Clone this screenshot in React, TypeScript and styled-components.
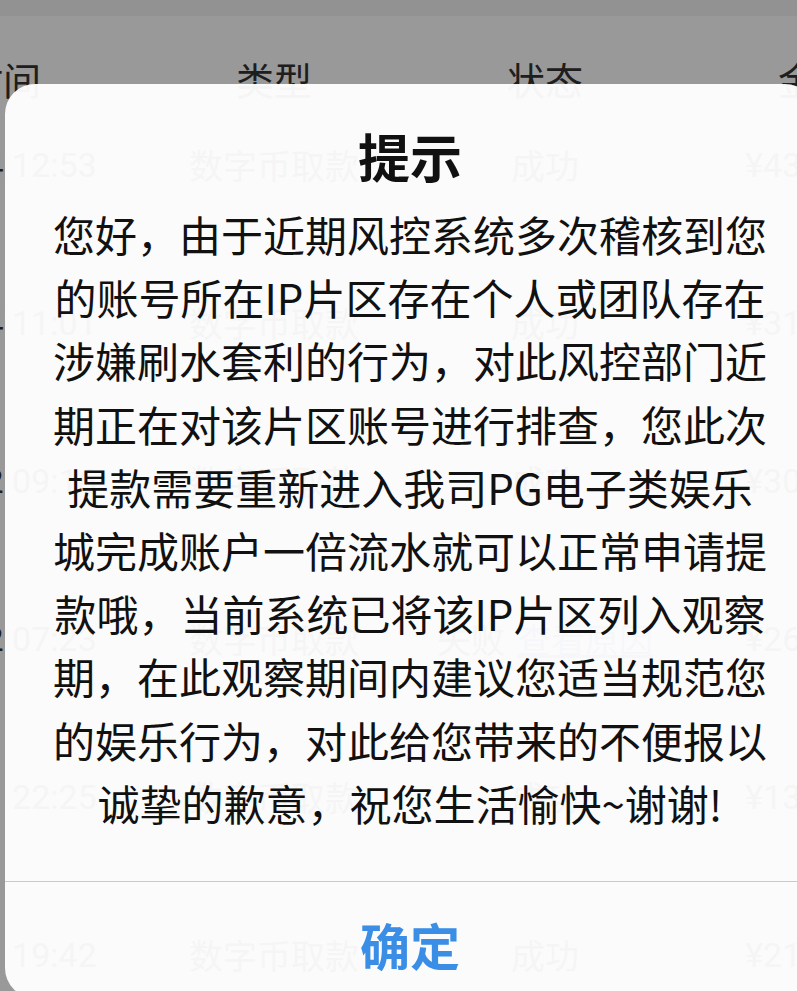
import React from 'react';
import styled, { createGlobalStyle } from 'styled-components';

const GlobalStyle = createGlobalStyle`
  html, body {
    margin: 0;
    padding: 0;
    background: #ffffff;
  }
  body {
    width: 797px;
    height: 991px;
    overflow: hidden;
    font-family: Roboto, "Noto Sans CJK SC", sans-serif;
  }
`;

const Page = styled.div`
  position: relative;
  width: 797px;
  height: 991px;
  overflow: hidden;
  background: #ffffff;
`;

const TopStrip = styled.div`
  height: 16px;
  background: #f3f3f3;
`;

const Table = styled.div`
  width: 1084px;
  margin-left: -171px;
`;

const Row = styled.div<{ $header?: boolean }>`
  display: grid;
  grid-template-columns: 348px 194px 348px 194px;
  height: ${(p) => (p.$header ? '127px' : '158px')};
  box-sizing: border-box;
  padding-top: ${(p) => (p.$header ? '44px' : '2px')};
  font-family: ${(p) => (p.$header ? '"Noto Sans CJK SC", sans-serif' : 'Roboto, "Noto Sans CJK SC", sans-serif')};
  font-size: ${(p) => (p.$header ? '38px' : '34px')};
  line-height: ${(p) => (p.$header ? '38px' : '40px')};
  color: #333333;
`;

const Cell = styled.div<{ $left?: boolean }>`
  text-align: ${(p) => (p.$left ? 'left' : 'center')};
  padding-left: ${(p) => (p.$left ? '3px' : '0')};
  white-space: nowrap;
`;

const CjkText = styled.span`
  font-family: "Noto Sans CJK SC", sans-serif;
`;

const Link = styled.span`
  font-family: "Noto Sans CJK SC", sans-serif;
  color: #3a8ee6;
  text-decoration: underline;
  margin-left: 12px;
`;

const Overlay = styled.div`
  position: absolute;
  inset: 0;
  background: rgba(0, 0, 0, 0.4);
`;

const Dialog = styled.div`
  position: absolute;
  top: 84px;
  left: 5px;
  width: 810px;
  height: 914px;
  border-radius: 30px;
  background: rgba(255, 255, 255, 0.955);
  display: flex;
  flex-direction: column;
  align-items: center;
  padding-top: 42px;
  box-sizing: border-box;
  font-family: "Noto Sans CJK SC", sans-serif;
`;

const Title = styled.div`
  font-size: 52px;
  font-weight: 700;
  line-height: 60px;
  color: #111111;
`;

const Body = styled.div`
  margin-top: 16px;
  width: 740px;
  font-size: 42px;
  line-height: 63.2px;
  text-align: center;
  color: #111111;
`;

const Line = styled.span`
  display: block;
  white-space: nowrap;
`;

const Divider = styled.div`
  align-self: stretch;
  margin-top: 47px;
  height: 1px;
  background: #cacaca;
`;

const Button = styled.div`
  align-self: stretch;
  flex: 1;
  display: flex;
  align-items: center;
  justify-content: center;
  padding-top: 8px;
  font-size: 50px;
  font-weight: 700;
  line-height: 1;
  color: #3a8ee6;
`;

type Rec = { time: string; type: string; status: string; link?: string; amount: string };

const rows: Rec[] = [
  { time: '2024-07-14 12:53', type: '数字币取款', status: '成功', amount: '¥4300.00' },
  { time: '2024-07-14 11:01', type: '数字币取款', status: '成功', amount: '¥3100.00' },
  { time: '2024-07-12 09:16', type: '数字币取款', status: '成功', amount: '¥3000.00' },
  { time: '2024-07-12 07:23', type: '数字币取款', status: '失败', link: '查看原因', amount: '¥2600.00' },
  { time: '2024-07-11 22:25', type: '数字币取款', status: '成功', amount: '¥1300.00' },
  { time: '2024-07-11 19:42', type: '数字币取款', status: '成功', amount: '¥2100.00' },
];

const lines = [
  '您好，由于近期风控系统多次稽核到您',
  '的账号所在IP片区存在个人或团队存在',
  '涉嫌刷水套利的行为，对此风控部门近',
  '期正在对该片区账号进行排查，您此次',
  '提款需要重新进入我司PG电子类娱乐',
  '城完成账户一倍流水就可以正常申请提',
  '款哦，当前系统已将该IP片区列入观察',
  '期，在此观察期间内建议您适当规范您',
  '的娱乐行为，对此给您带来的不便报以',
  '诚挚的歉意，祝您生活愉快~谢谢!',
];

export default function App() {
  return (
    <Page>
      <GlobalStyle />
      <TopStrip />
      <Table>
        <Row $header>
          <Cell>时间</Cell>
          <Cell>类型</Cell>
          <Cell>状态</Cell>
          <Cell>金额</Cell>
        </Row>
        {rows.map((r, i) => (
          <Row key={i}>
            <Cell $left>{r.time}</Cell>
            <Cell>
              <CjkText>{r.type}</CjkText>
            </Cell>
            <Cell>
              <CjkText>{r.status}</CjkText>
              {r.link && <Link>{r.link}</Link>}
            </Cell>
            <Cell>{r.amount}</Cell>
          </Row>
        ))}
      </Table>
      <Overlay />
      <Dialog>
        <Title>提示</Title>
        <Body>
          {lines.map((l, i) => (
            <Line key={i}>{l}</Line>
          ))}
        </Body>
        <Divider />
        <Button>确定</Button>
      </Dialog>
    </Page>
  );
}
